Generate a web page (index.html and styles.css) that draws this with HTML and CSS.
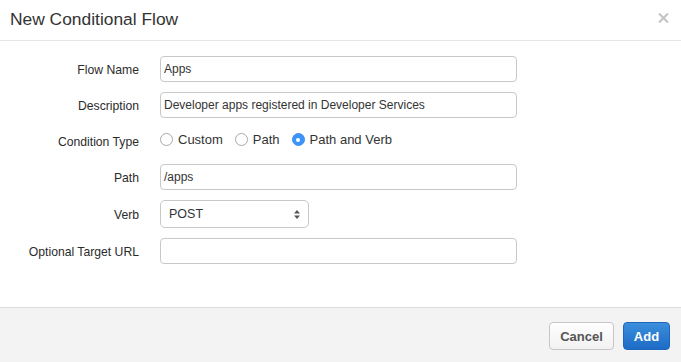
FILE: index.html
```html
<!DOCTYPE html>
<html>
<head>
<meta charset="utf-8">
<link rel="stylesheet" href="styles.css">
</head>
<body>
<div class="modal">
  <div class="modal-header">
    <h1 class="title">New Conditional Flow</h1>
    <svg class="close" width="11" height="10" viewBox="0 0 11 10"><path d="M1 0.5 L10 9.5 M10 0.5 L1 9.5" stroke="#c6c6c6" stroke-width="2.2" fill="none"/></svg>
  </div>
  <div class="modal-body">
    <div class="row">
      <label class="lbl">Flow Name</label>
      <div class="field"><div class="input">Apps</div></div>
    </div>
    <div class="row">
      <label class="lbl">Description</label>
      <div class="field"><div class="input">Developer apps registered in Developer Services</div></div>
    </div>
    <div class="row radio-row">
      <label class="lbl">Condition Type</label>
      <div class="radios">
        <span class="radio"><span class="circle"></span>Custom</span>
        <span class="radio"><span class="circle"></span>Path</span>
        <span class="radio"><span class="circle checked"></span>Path and Verb</span>
      </div>
    </div>
    <div class="row">
      <label class="lbl">Path</label>
      <div class="field"><div class="input">/apps</div></div>
    </div>
    <div class="row row-select">
      <label class="lbl">Verb</label>
      <div class="select">
        <span>POST</span>
        <svg width="6" height="9" viewBox="0 0 6 9"><path d="M3 0 L6 3.5 L0 3.5 Z M3 9 L6 5.5 L0 5.5 Z" fill="#555"/></svg>
      </div>
    </div>
    <div class="row">
      <label class="lbl">Optional Target URL</label>
      <div class="field"><div class="input"></div></div>
    </div>
  </div>
  <div class="modal-footer">
    <button class="btn btn-default">Cancel</button>
    <button class="btn btn-primary">Add</button>
  </div>
</div>
</body>
</html>
```
FILE: styles.css
```css
html, body {
  margin: 0;
  padding: 0;
  background: #fff;
}
body {
  font-family: "Liberation Sans", Arial, sans-serif;
  color: #333;
  width: 681px;
  height: 362px;
  overflow: hidden;
}
.modal {
  display: flex;
  flex-direction: column;
  height: 362px;
}
.modal-header {
  display: flex;
  justify-content: space-between;
  align-items: flex-start;
  height: 40px;
  border-bottom: 1px solid #e5e5e5;
  box-sizing: content-box;
}
.title {
  margin: 0;
  padding: 9px 0 0 10px;
  font-size: 17.4px;
  line-height: 20px;
  font-weight: normal;
  color: #333;
}
.close {
  margin: 13px 12px 0 0;
}
.modal-body {
  flex: 1;
  padding-top: 15px;
}
.row {
  display: flex;
  align-items: center;
  margin-bottom: 10px;
  height: 26px;
}
.lbl {
  width: 139px;
  text-align: right;
  font-size: 12.2px;
  color: #2b2b2b;
  margin-right: 21px;
  padding-top: 1px;
}
.field {
  width: 357px;
}
.input {
  box-sizing: border-box;
  height: 26px;
  border: 1px solid #c8c8c8;
  border-radius: 4px;
  padding: 0 3px;
  font-size: 12px;
  line-height: 24px;
  color: #333;
  background: #fff;
}
.radio-row .radios {
  display: flex;
  align-items: center;
  font-size: 13px;
  color: #333;
  padding-bottom: 3px;
}
.radio {
  display: flex;
  align-items: center;
  margin-right: 12px;
}
.circle {
  box-sizing: border-box;
  width: 13px;
  height: 13px;
  border: 1px solid #a9a9a9;
  border-radius: 50%;
  background: #fff;
  margin-right: 5px;
  display: flex;
  align-items: center;
  justify-content: center;
}
.circle.checked {
  border: 1px solid #3a91f2;
  background: #3d95f7;
}
.circle.checked::after {
  content: "";
  width: 4px;
  height: 4px;
  border-radius: 50%;
  background: #fff;
}
.row-select {
  height: 28px;
}
.select {
  box-sizing: border-box;
  width: 149px;
  height: 28px;
  border: 1px solid #c8c8c8;
  border-radius: 5px;
  display: flex;
  align-items: center;
  justify-content: space-between;
  padding: 0 8px 0 8px;
  font-size: 12.5px;
  color: #333;
  background: #fff;
}
.modal-footer {
  border-top: 1px solid #dcdcdc;
  background: #f3f3f3;
  height: 55px;
  display: flex;
  justify-content: flex-end;
  align-items: flex-start;
  padding: 14px 11px 0 0;
  box-sizing: border-box;
  gap: 9px;
}
.btn {
  height: 28px;
  border-radius: 4px;
  font-family: "Liberation Sans", Arial, sans-serif;
  font-size: 13px;
  font-weight: bold;
  padding: 0;
}
.btn-default {
  width: 65px;
  background: linear-gradient(#fefefe, #f2f2f2);
  border: 1px solid #c6c6c6;
  color: #555;
}
.btn-primary {
  width: 47px;
  background: linear-gradient(#3b8fdc, #1d6bc6);
  border: 1px solid #1e66ba;
  color: #fff;
}
```
